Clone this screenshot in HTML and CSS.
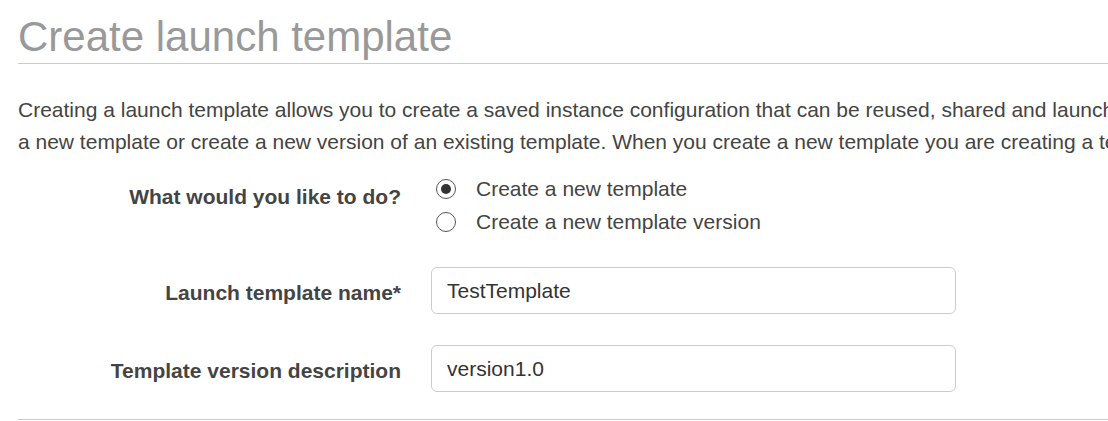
FILE: index.html
```html
<!DOCTYPE html>
<html lang="en">
<head>
<meta charset="utf-8">
<title>Create launch template</title>
<link rel="stylesheet" href="styles.css">
</head>
<body>
<div class="page">
  <h1 class="title">Create launch template</h1>
  <p class="intro">Creating a launch template allows you to create a saved instance configuration that can be reused, shared and launched at a later time. Templates can have multiple versions.<br>a new template or create a new version of an existing template. When you create a new template you are creating a template version that becomes the default version.</p>

  <form class="form">
    <div class="row">
      <div class="label label-radio">What would you like to do?</div>
      <div class="options">
        <label class="option"><input type="radio" name="mode" class="radio" checked><span>Create a new template</span></label>
        <label class="option"><input type="radio" name="mode" class="radio"><span>Create a new template version</span></label>
      </div>
    </div>
    <div class="row row-input">
      <label class="label" for="name">Launch template name*</label>
      <input class="field" id="name" type="text" value="TestTemplate">
    </div>
    <div class="row row-input">
      <label class="label" for="desc">Template version description</label>
      <input class="field" id="desc" type="text" value="version1.0">
    </div>
  </form>
  <div class="divider"></div>
</div>
</body>
</html>
```

FILE: styles.css
```css
html, body {
  margin: 0;
  padding: 0;
  background: #fff;
  overflow: hidden;
}

body {
  font-family: "Liberation Sans", Arial, sans-serif;
  font-size: 21px;
  color: #444;
}

.page {
  width: 1700px;
  padding-left: 18px;
}

.title {
  margin: 0;
  padding: 13px 0 2px;
  font-size: 42px;
  line-height: 48px;
  font-weight: normal;
  color: #999;
  border-bottom: 1px solid #ccc;
}

.intro {
  margin: 30px 0 0;
  line-height: 31.5px;
  white-space: nowrap;
}

.form {
  margin-top: 15px;
}

.row {
  display: grid;
  grid-template-columns: 383px auto;
  column-gap: 30px;
  align-items: start;
}

.label {
  text-align: right;
  font-weight: bold;
  line-height: 31.5px;
  padding-top: 10px;
}

.label-radio {
  padding-top: 9px;
}

.options {
  display: flex;
  flex-direction: column;
}

.option {
  display: flex;
  align-items: center;
  height: 33px;
  line-height: 33px;
  padding-left: 5px;
  cursor: pointer;
}

.radio {
  -webkit-appearance: none;
  appearance: none;
  box-sizing: border-box;
  width: 20px;
  height: 20px;
  margin: 0 20px 0 0;
  border: 1px solid #555;
  border-radius: 50%;
  background: #fff;
  display: flex;
  align-items: center;
  justify-content: center;
}

.radio:checked::after {
  content: "";
  width: 10px;
  height: 10px;
  border-radius: 50%;
  background: #333;
}

.row-input {
  margin-top: 29px;
}

.row-input + .row-input {
  margin-top: 31px;
}

.field {
  box-sizing: border-box;
  width: 525px;
  height: 47px;
  padding: 0 15px;
  border: 1px solid #ccc;
  border-radius: 6px;
  font-family: "Liberation Sans", Arial, sans-serif;
  font-size: 21px;
  color: #333;
  background: #fff;
  outline: none;
}

.divider {
  margin-top: 27px;
  border-top: 1px solid #ccc;
}
```
